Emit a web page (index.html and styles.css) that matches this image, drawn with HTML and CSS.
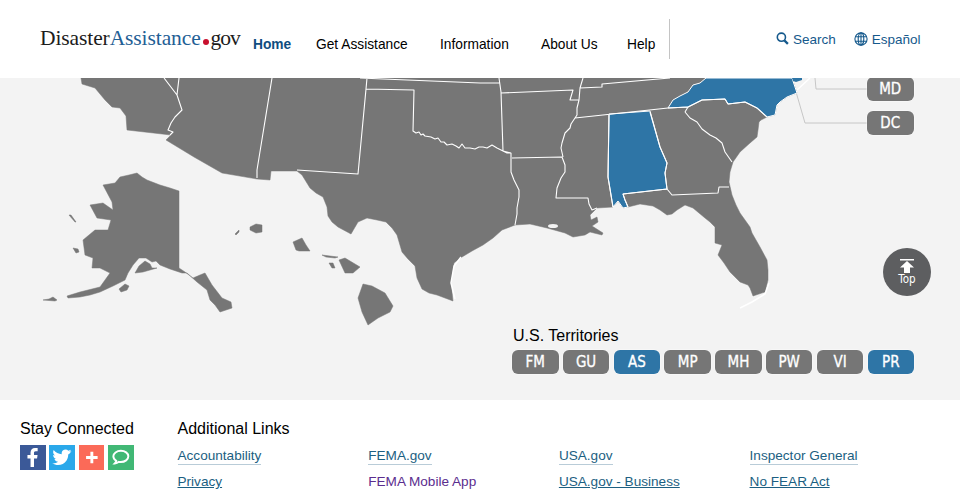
FILE: index.html
```html
<!DOCTYPE html>
<html lang="en">
<head>
<meta charset="utf-8">
<title>DisasterAssistance.gov</title>
<link rel="stylesheet" href="styles.css">
</head>
<body>
<header class="site-header">
  <a class="logo" href="#"><span class="logo-dark">Disaster</span><span class="logo-blue">Assistance</span><span class="logo-dot"></span><span class="logo-dark logo-gov">gov</span></a>
  <nav class="main-nav">
    <a class="nav-home" href="#">Home</a>
    <a class="nav-get" href="#">Get Assistance</a>
    <a class="nav-info" href="#">Information</a>
    <a class="nav-about" href="#">About Us</a>
    <a class="nav-help" href="#">Help</a>
  </nav>
  <div class="nav-rule"></div>
  <div class="util-nav">
    <a href="#"><svg class="util-icon" viewBox="0 0 14 14"><circle cx="5.800" cy="5.600" r="4.400"/><path class="thick" d="M9 9l3.800 3.800"/></svg>Search</a>
    <a href="#"><svg class="util-icon globe" viewBox="0 0 14 14"><circle cx="7" cy="7" r="6.100"/><ellipse cx="7" cy="7" rx="2.800" ry="6.100"/><path d="M7 1v12M1.400 4.800h11.200M1.400 9.200h11.200"/></svg>Español</a>
  </div>
</header>

<main class="map-panel">
  <svg class="map" viewBox="0 78 960 322" aria-label="Map of the United States">
    <polyline class="leader" points="815,78 816,89 868,89"/>
    <polyline class="leader" points="792,78 805,123 868,123"/>
    <polygon class="land" points="81,78 792,78 797,93 787,97 780,102 777,105 775,115 767,117 761,120 759,122 758,130 757,137 750,143 740,152 733,162 730,172 729,182 732,195 736,205 740,213 750,227 752,233 760,247 767,260 768,270 768,280 765,292 753,296 750,288 748,285 740,282 734,276 730,272 724,263 718,255 722,245 715,243 715,227 710,222 705,218 693,208 685,205 677,210 672,214 667,215 660,210 653,206 640,204 628,207 623,208 618,201 613,207 597,208 590,215 591,220 597,217 598,222 592,226 603,233 602,235 590,232 585,235 573,237 565,233 547,228 530,224 515,225 502,230 493,238 483,245 472,251 462,257 454,263 451,283 453,301 445,298 437,295 429,293 422,289 417,278 415,266 408,259 402,252 397,235 392,228 386,222 377,220 367,218 358,222 351,234 338,227 332,222 328,216 327,207 323,197 316,193 310,188 302,175 297,171 271,171 270,180 257,179 222,173 194,157 166,140 171,135 127,130 126,116 120,108 112,107 105,100 100,94 95,88 82,84"/>
    <polygon class="active" points="668,108 673,100 680,96 688,92 693,85 700,83 706,78 792,78 797,93 787,97 780,102 777,105 775,115 767,117 757,108 745,102 728,104 725,99 702,100 688,107"/>
    <polygon class="active" points="609,114 650,111 660,147 667,163 665,173 667,189 623,194 625,200 628,207 623,208 618,201 613,207 608,177"/>
    <polygon class="active no-line" points="792,78 802,78 802,80 796,82 793,81"/>
    <path class="border" d="M164 78L177 95 179 78M177 95L182 110 175 117 171 123 168 130 173 132 170 135M272 78L257 170 257 178M367 78L366 89 358 174 297 170M366 89L414 90 413 131 416 133 419 132 421 135 423 134 425 136 431 137 435 139 438 138 441 142 444 142 447 145 452 144 456 146 459 148 462 144 465 148 470 148 475 149 479 147 483 147 487 148 492 145 497 148 501 150 507 153 511 153 511 172 514 180 519 190 519 197 517 208 517 214 515 225M360 78L383 79 480 83 500 83M499 78L501 92 503 151 511 153M512 158L562 157 565 165 565 172 561 178 557 188 556 198 588 198 589 204 592 210 597 208M501 93L573 90 570 100 579 100 577 108 577 115 575 118 571 124 570 128 565 133 562 143 561 148 563 157M575 118L668 108 688 107M583 78L580 88 602 87 602 84 670 78M580 88L579 100M609 115L608 177 613 207M650 112L660 147 667 163 665 173 667 189 623 194 625 200 628 207M667 189L672 195 718 193 719 187 729 187M685 112L690 118 697 122 702 129 710 135 716 138 722 143 725 152 732 162M688 107L702 100 725 99 728 104 745 102 757 108 767 117M685 112L688 107"/>
    <polyline class="coast-line" points="461,257 454,266 451,283 455,299"/>
    <polyline class="coast-line" points="769,283 765,294 752,302 740,308"/>
    <polyline class="coast-line" points="810,78 797,90"/>
    <ellipse class="bay" cx="553" cy="226" rx="5" ry="2"/>
    <polygon class="land" points="103,185 115,183 120,177 129,175 137,173 142,177 147,180 160,185 170,188 179,191 179,268 185,272 193,278 200,275 205,273 212,285 222,298 231,302 232,308 220,312 215,305 210,300 207,290 197,282 187,273 182,273 170,269 160,265 156,261 152,262 146,258 139,258 133,265 128,273 125,280 113,286 100,292 90,295 80,297 68,298 67,296 80,292 100,287 110,273 100,268 92,268 93,258 85,255 83,240 95,230 108,230 111,220 97,218 90,205 103,203 113,210 112,202"/>
    <polygon class="land" points="135,273 139,266 145,261 150,264 152,268 157,268 143,272"/>
    <polygon class="land" points="69,215 71,215 76,222 75,222"/>
    <polygon class="land" points="73,248 78,249 79,252 76,253"/>
    <polygon class="land" points="119,289 125,284 129,286 127,290 121,292"/>
    <polygon class="land" points="43,300 49,299 53,297 57,300 55,301"/>
    <polygon class="land" points="235,234 239,230 239,232 236,235"/>
    <polygon class="land" points="250,227 256,224 262,225 262,232 256,233 250,230"/>
    <polygon class="land" points="293,242 302,238 306,245 310,251 299,251 296,250"/>
    <polygon class="land" points="322,255 338,257 335,258 326,257"/>
    <polygon class="land" points="329,263 333,263 335,268 332,268"/>
    <polygon class="land" points="339,260 345,258 360,267 353,273 345,273"/>
    <polygon class="land" points="363,284 372,286 385,293 393,306 390,312 378,318 368,325 362,312 358,298"/>
  </svg>

  <a class="state-btn btn-md" href="#">MD</a>
  <a class="state-btn btn-dc" href="#">DC</a>

  <a class="top-btn" href="#">
    <svg class="top-icon" viewBox="0 0 14 14"><path d="M0 0h14v1.500H0zM7 2l7 6.500H10V14H4V8.500H0z"/></svg>
    <span>Top</span>
  </a>

  <section class="territories">
    <h2>U.S. Territories</h2>
    <div class="terr-row">
      <a class="state-btn" href="#">FM</a>
      <a class="state-btn" href="#">GU</a>
      <a class="state-btn on" href="#">AS</a>
      <a class="state-btn" href="#">MP</a>
      <a class="state-btn" href="#">MH</a>
      <a class="state-btn" href="#">PW</a>
      <a class="state-btn" href="#">VI</a>
      <a class="state-btn on" href="#">PR</a>
    </div>
  </section>
</main>

<footer class="site-footer">
  <div class="connect">
    <h3>Stay Connected</h3>
    <div class="social">
      <a class="soc fb" href="#"><svg viewBox="0 0 26 26"><path d="M14.200 23v-9h3.200l.5-3.600h-3.700V8.200c0-1 .3-1.800 1.800-1.800h2V3.200c-.4 0-1.500-.2-2.800-.2-2.800 0-4.600 1.700-4.600 4.800v2.600H7.400V14h3.200v9z"/></svg></a>
      <a class="soc tw" href="#"><svg viewBox="0 0 26 26"><path d="M23 6.600c-.8.300-1.500.5-2.400.6.900-.5 1.500-1.300 1.800-2.300-.8.500-1.700.8-2.600 1-1.600-1.700-4.200-1.700-5.800-.1-1 1-1.400 2.400-1.100 3.800-3.300-.2-6.300-1.700-8.400-4.300-1.100 1.900-.5 4.300 1.300 5.500-.7 0-1.300-.2-1.900-.5 0 2 1.400 3.700 3.300 4.100-.6.200-1.200.2-1.900.1.500 1.700 2.100 2.800 3.800 2.900-1.700 1.300-3.900 1.900-6.100 1.700 5.200 3.300 11.600 2 14.900-3 1.200-1.800 1.800-3.900 1.700-6.100.9-.6 1.700-1.400 2.300-2.300z"/></svg></a>
      <a class="soc gp" href="#"><svg viewBox="0 0 26 26"><path d="M11.500 7h3v4.500H19v3h-4.500V19h-3v-4.500H7v-3h4.500z"/></svg></a>
      <a class="soc ch" href="#"><svg viewBox="0 0 26 26"><path class="chat" d="M13 6c-4.300 0-7.800 2.600-7.800 5.800 0 1.900 1.200 3.500 3 4.600-.2 1-.7 2-1.500 2.800 1.800-.1 3.200-.8 4.300-1.700.6.100 1.300.2 2 .2 4.300 0 7.800-2.600 7.800-5.900S17.300 6 13 6z"/></svg></a>
    </div>
  </div>
  <div class="links">
    <h3>Additional Links</h3>
    <div class="link-grid">
      <a class="soft" href="#">Accountability</a>
      <a class="soft" href="#">FEMA.gov</a>
      <a class="soft" href="#">USA.gov</a>
      <a class="soft" href="#">Inspector General</a>
      <a href="#">Privacy</a>
      <a class="visited" href="#">FEMA Mobile App</a>
      <a href="#">USA.gov - Business</a>
      <a href="#">No FEAR Act</a>
    </div>
  </div>
</footer>
</body>
</html>
```
FILE: styles.css
```css
* { box-sizing: border-box; }
html, body { margin: 0; padding: 0; }
body {
  width: 960px;
  height: 495px;
  overflow: hidden;
  background: #fff;
  font-family: "Liberation Sans", Arial, sans-serif;
  color: #000;
}
a { text-decoration: none; color: inherit; }
h2, h3 { margin: 0; font-weight: 400; font-size: 16px; }

/* header */
.site-header {
  height: 78px;
  background: #fff;
  display: flex;
  align-items: flex-start;
  padding-left: 40px;
  position: relative;
  z-index: 2;
}
.logo {
  display: flex;
  align-items: baseline;
  width: 213px;
  margin-top: 26px;
  font-family: "Liberation Serif", "Times New Roman", serif;
  font-size: 21.500px;
  letter-spacing: -0.1px;
  line-height: 25px;
  white-space: nowrap;
}
.logo-dark { color: #1c1c1c; }
.logo-blue { color: #1f6095; }
.logo-gov { letter-spacing: -1px; }
.logo-dot {
  width: 6px;
  height: 6px;
  margin: 0 2px 0 2px;
  border-radius: 50%;
  background: #c8102e;
}
.main-nav {
  display: flex;
  margin-top: 37px;
  font-size: 13.750px;
  line-height: 16px;
  width: 416px;
}
.nav-home { font-weight: 700; color: #0f4d80; width: 63px; }
.nav-get { width: 124px; }
.nav-info { width: 101px; }
.nav-about { width: 86px; }
.nav-help { width: 42px; }
.nav-rule { width: 1px; height: 40px; margin-top: 19px; background: #c4c4c4; }
.util-nav {
  display: flex;
  gap: 18px;
  margin: 32px 0 0 106px;
  font-size: 13.500px;
  line-height: 16px;
  color: #15598c;
}
.util-nav a { display: flex; align-items: center; gap: 4px; }
.util-icon {
  width: 13px;
  height: 13px;
  margin-top: -3px;
  fill: none;
  stroke: #15598c;
  stroke-width: 1.700;
}
.util-icon .thick { stroke-width: 2.400; }
.globe { width: 14px; height: 14px; stroke-width: 1.100; }

/* map */
.map-panel {
  position: relative;
  height: 322px;
  background: #f3f3f3;
}
.map { position: absolute; left: 0; top: 0; width: 960px; height: 322px; display: block; }
.land { fill: #767676; stroke: #767676; stroke-width: .5; stroke-linejoin: round; }
.active { fill: #2e75a6; stroke: #fff; stroke-width: 1; stroke-linejoin: round; }
.no-line { stroke: none; }
.border { fill: none; stroke: #fff; stroke-width: 1.100; stroke-linejoin: round; }
.coast-line { fill: none; stroke: #fff; stroke-width: 1.500; }
.bay { fill: #f3f3f3; }
.leader { fill: none; stroke: #c6c6c6; stroke-width: 1; }

.state-btn {
  display: flex;
  align-items: center;
  justify-content: center;
  width: 46.500px;
  height: 24px;
  border-radius: 6px;
  background: #767676;
  color: #fff;
  font-family: "DejaVu Sans", sans-serif;
  font-stretch: condensed;
  font-size: 15px;
  line-height: 1;
  -webkit-text-stroke: .3px #fff;
  box-shadow: 0 0 0 .5px rgba(255, 255, 255, .7);
}
.state-btn.on { background: #2e75a6; }
.btn-md { position: absolute; left: 867px; top: -1px; }
.btn-dc { position: absolute; left: 867px; top: 33px; }

.top-btn {
  position: absolute;
  left: 883px;
  top: 170px;
  width: 48px;
  height: 48px;
  border-radius: 50%;
  background: #5d5e60;
  color: #fff;
  font-family: "DejaVu Sans", sans-serif;
  font-stretch: condensed;
  font-size: 11.500px;
  line-height: 12px;
  display: flex;
  flex-direction: column;
  align-items: center;
  padding-top: 11px;
}
.top-icon { width: 14px; height: 14px; fill: #fff; }

.territories { position: absolute; left: 512px; top: 249px; }
.territories h2 { margin-left: 1px; line-height: 18px; }
.terr-row { display: flex; gap: 4.300px; margin-top: 5px; }

/* footer */
.site-footer {
  height: 95px;
  overflow: hidden;
  background: #fff;
  display: flex;
  padding: 20px 0 0 20px;
}
.site-footer h3 { line-height: 18px; }
.connect { width: 157.500px; }
.social { display: flex; gap: 3.600px; margin-top: 7px; }
.soc { display: block; width: 25.700px; height: 25px; }
.soc svg { display: block; width: 100%; height: 100%; fill: #fff; }
.fb { background: #3b5998; }
.tw { background: #2aa8ea; }
.gp { background: #fb6a58; }
.ch { background: #41b875; }
.soc .chat { fill: none; stroke: #fff; stroke-width: 2; }
.link-grid {
  display: grid;
  grid-template-columns: repeat(4, 190.700px);
  grid-auto-rows: 26px;
  margin-top: 10px;
  font-size: 13.600px;
  line-height: 16px;
  color: #1c5f82;
}
.link-grid a { justify-self: start; height: 16px; text-decoration: underline; }
.link-grid .soft { text-decoration: none; border-bottom: 1px solid #b9ccd8; height: 17px; }
.link-grid .visited { color: #5b2d8e; text-decoration: none; }
```
